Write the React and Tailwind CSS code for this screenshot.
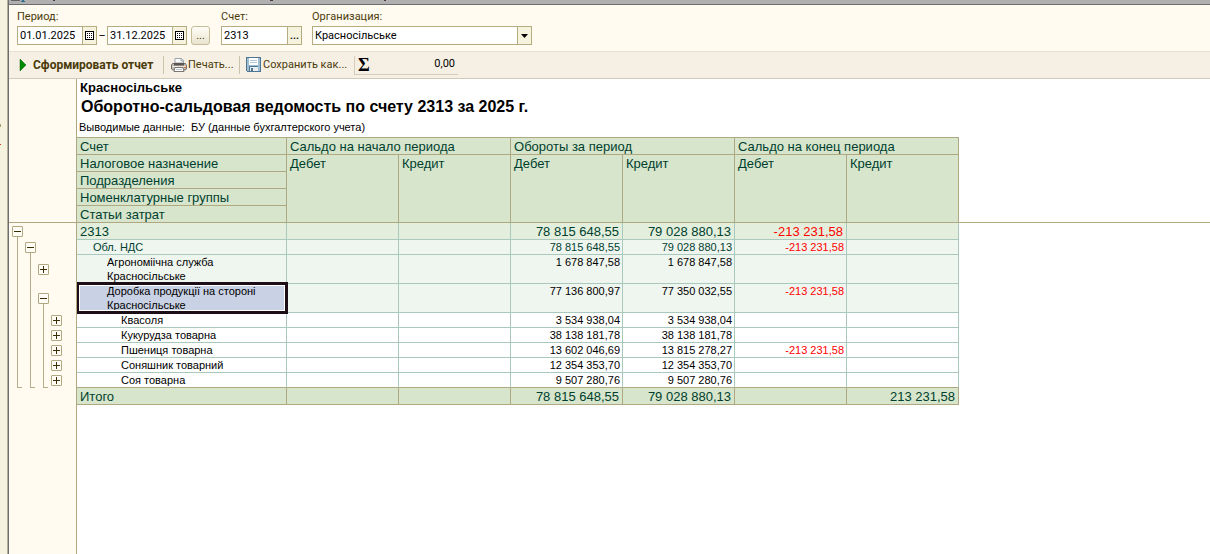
import clsx from "clsx";

const accounts = ["Счет", "Налоговое назначение", "Подразделения", "Номенклатурные группы", "Статьи затрат"];
const groups = ["Сальдо на начало периода", "Обороты за период", "Сальдо на конец периода"];

// level = nesting depth in the tree, values = six money columns
const rows = [
  { name: "2313", level: 1, open: true, values: ["", "", "78 815 648,55", "79 028 880,13", "-213 231,58", ""] },
  { name: "Обл. НДС", level: 2, open: true, values: ["", "", "78 815 648,55", "79 028 880,13", "-213 231,58", ""] },
  { name: "Агрономіічна служба Красносільське", level: 3, open: false, values: ["", "", "1 678 847,58", "1 678 847,58", "", ""] },
  { name: "Доробка продукції на стороні Красносільське", level: 3, open: true, selected: true, values: ["", "", "77 136 800,97", "77 350 032,55", "-213 231,58", ""] },
  { name: "Квасоля", level: 4, values: ["", "", "3 534 938,04", "3 534 938,04", "", ""] },
  { name: "Кукурудза товарна", level: 4, values: ["", "", "38 138 181,78", "38 138 181,78", "", ""] },
  { name: "Пшениця товарна", level: 4, values: ["", "", "13 602 046,69", "13 815 278,27", "-213 231,58", ""] },
  { name: "Соняшник товарний", level: 4, values: ["", "", "12 354 353,70", "12 354 353,70", "", ""] },
  { name: "Соя товарна", level: 4, values: ["", "", "9 507 280,76", "9 507 280,76", "", ""] },
];

const totals = ["", "", "78 815 648,55", "79 028 880,13", "", "213 231,58"];

const levelStyles = {
  1: { row: "h-[17px] text-[13px] leading-[15px] text-[#003f2f]", cell: "bg-[#e3efdc] pt-px", indent: "pl-[3px]", value: "pr-[3px]", tree: "h-[17px]" },
  2: { row: "h-[15px] text-[11px] leading-[14px] text-[#003f2f]", cell: "bg-[#eff5ef]", indent: "pl-4", value: "pr-[2px]", tree: "h-[15px]" },
  3: { row: "h-[29px] text-[11px] leading-[14px] text-black", cell: "bg-[#eff5ef]", indent: "pl-[30px] pr-6", value: "pr-[2px]", tree: "h-[29px]" },
  4: { row: "h-[15px] text-[11px] leading-[14px] text-black", cell: "bg-white", indent: "pl-11", value: "pr-[2px]", tree: "h-[15px]" },
};

const CalendarIcon = () => (
  <svg width="9" height="9" viewBox="0 0 9 9" shapeRendering="crispEdges" aria-hidden="true">
    <path d="M0 0h9v9h-9z" fill="#000" />
    <path d="M1 1h7v7h-7z" fill="#fff" />
    <path d="M2 2h1v1h-1zM4 2h1v1h-1zM6 2h1v1h-1zM2 4h1v1h-1zM4 4h1v1h-1zM6 4h1v1h-1zM2 6h1v1h-1zM4 6h1v1h-1zM6 6h1v1h-1z" fill="#000" />
  </svg>
);

const PrinterIcon = () => (
  <svg width="16" height="16" viewBox="0 0 16 16" aria-hidden="true">
    <path d="M4 6V1.500h6.500L12.500 3.500V6z" fill="#fff" stroke="#9aa3ad" />
    <path d="M10 1.500v2.500h2.500" fill="none" stroke="#9aa3ad" />
    <path d="M1.500 6.500h13l1 2v3.500l-1.500 1h-12l-1.500-1V8z" fill="#c4bcb2" stroke="#77706a" />
    <path d="M3 6h10v2.500H3z" fill="#5c5753" />
    <path d="M1.500 9.500h13" stroke="#ece8e2" />
    <path d="M4 10.500h8l1 4H3z" fill="#fff" stroke="#7b7672" />
    <path d="M5 12.500h6" stroke="#b8c4d4" />
    <rect x="13" y="10" width="2" height="1" fill="#d97a35" />
  </svg>
);

const DiskIcon = () => (
  <svg width="16" height="16" viewBox="0 0 16 16" shapeRendering="crispEdges" aria-hidden="true">
    <path d="M0 0h15v15h-14l-1-1z" fill="#4f7590" />
    <path d="M1 1h13v13h-13z" fill="#9dbdd2" />
    <path d="M3 1h9v7h-9z" fill="#fff" />
    <path d="M4 3h7v1h-7zM4 5h7v1h-7z" fill="#b5c8d6" />
    <path d="M3 9h9v5h-9z" fill="#4f7590" />
    <path d="M4 10h8v4h-8z" fill="#e8eef3" />
    <path d="M5 11h2v3h-2z" fill="#4f7590" />
  </svg>
);

const DateField = ({ id, label, value }) => (
  <div className="flex h-[19px] w-20 border border-[#b5ad7f] bg-white">
    <input id={id} aria-label={label} defaultValue={value} className="min-w-0 flex-1 pt-px pl-[2px] text-black outline-none" />
    <button aria-label="Календарь" className="flex w-[14px] items-center justify-center border-l border-[#b5ad7f] bg-[#f5f2dd]">
      <CalendarIcon />
    </button>
  </div>
);

const Separator = () => <div className="h-[18px] w-px bg-[#c9c3ae]" />;

const Filters = () => (
  <div className="flex border-b border-[#e6e1d2] bg-[#fffbf0] pt-1 pb-[6px] pl-2">
    <div className="flex w-[204px] flex-col gap-[2px]">
      <label htmlFor="from" className="leading-[15px]">Период:</label>
      <div className="flex items-center">
        <DateField id="from" label="Начало периода" value="01.01.2025" />
        <span className="w-[10px] text-center leading-[19px] text-black">–</span>
        <DateField id="to" label="Конец периода" value="31.12.2025" />
        <button aria-label="Выбрать период" className="ml-1 h-[19px] w-[19px] rounded-[3px] border border-[#c4bd98] bg-linear-to-b from-[#fffdf6] to-[#e9e4cf] leading-[15px]">
          ...
        </button>
      </div>
    </div>
    <div className="flex w-[91px] flex-col gap-[2px]">
      <label htmlFor="account" className="leading-[15px]">Счет:</label>
      <div className="flex h-[19px] w-[81px] border border-[#b5ad7f] bg-white">
        <input id="account" defaultValue="2313" className="min-w-0 flex-1 pt-px pl-[2px] text-black outline-none" />
        <button aria-label="Выбрать счет" className="w-[14px] border-l border-[#b5ad7f] bg-[#f5f2dd] font-medium leading-[15px] text-black">
          ...
        </button>
      </div>
    </div>
    <div className="flex flex-col gap-[2px]">
      <label htmlFor="org" className="leading-[15px]">Организация:</label>
      <div className="flex h-[19px] w-[220px] border border-[#b5ad7f] bg-white">
        <select id="org" className="min-w-0 flex-1 appearance-none pt-px pl-[2px] text-black outline-none">
          <option>Красносільське</option>
        </select>
        <span className="flex w-[14px] items-center justify-center border-l border-[#b5ad7f] bg-[#f5f2dd]">
          <svg width="7" height="4" viewBox="0 0 7 4" aria-hidden="true">
            <path d="M0 0h7L3.500 4z" fill="#000" />
          </svg>
        </span>
      </div>
    </div>
  </div>
);

const Toolbar = () => (
  <div className="flex h-[27px] items-center border-b border-[#d0cab8] bg-[#f6f0e4] pl-[10px]">
    <button className="flex items-center gap-[6px] text-[12px] font-bold">
      <svg width="8" height="12" viewBox="0 0 8 12" aria-hidden="true">
        <path d="M1 0l6 6-6 6z" fill="#008a00" stroke="#00600a" strokeWidth="0.500" />
      </svg>
      <span className="w-[130px] text-left">Сформировать отчет</span>
    </button>
    <Separator />
    <button className="ml-[7px] flex w-[68px] items-center gap-px">
      <PrinterIcon />
      Печать...
    </button>
    <Separator />
    <button className="ml-[6px] flex w-[108px] items-center gap-px">
      <DiskIcon />
      Сохранить как...
    </button>
    <div className="flex h-[19px] w-[104px] items-center justify-between border-b border-l border-[#d3cdba] pr-[3px] pl-[3px] text-black">
      <span className="font-['Liberation_Serif',serif] text-[18px] leading-[18px] font-bold">Σ</span>
      <span>0,00</span>
    </div>
  </div>
);

const Toggle = ({ open, name }) => (
  <button
    aria-label={name}
    aria-expanded={!!open}
    className="flex h-[11px] w-[11px] shrink-0 items-center justify-center rounded-[1px] border border-[#b0a880] bg-[#fffdf6]"
  >
    <svg width="7" height="7" viewBox="0 0 7 7" shapeRendering="crispEdges" aria-hidden="true">
      <path d={open ? "M0 3h7v1h-7z" : "M0 3h7v1h-7zM3 0h1v7h-1z"} fill="#3b2f08" />
    </svg>
  </button>
);

const TreeRow = ({ row, last }) => (
  <div className={clsx("flex pl-[2px]", levelStyles[row.level].tree)}>
    {[1, 2, 3, 4].slice(0, row.level).map((level) => {
      if (level === row.level) {
        return (
          <div key={level} className="flex w-[13px] flex-col items-center">
            <div className="flex-1" />
            <Toggle open={row.open} name={row.name} />
            <div className={clsx("w-px flex-1", row.open && "bg-[#b5ad8a]")} />
          </div>
        );
      }
      return (
        <div key={level} className="flex w-[13px] justify-end">
          <div className={clsx("w-[7px] border-l border-[#b5ad8a]", last && "flex items-end")}>
            {last && <div className="h-px w-1 bg-[#b5ad8a]" />}
          </div>
        </div>
      );
    })}
  </div>
);

const Tree = () => (
  <div className="w-[68px] shrink-0 border-r border-[#b0a880] bg-[#fffbf0]">
    <div className="h-36 border-b border-[#b0a880]" />
    {rows.map((row, i) => (
      <TreeRow key={row.name} row={row} last={i === rows.length - 1} />
    ))}
  </div>
);

const headCell = "border-r border-b border-[#b0a880] bg-[#d6e5cb] pt-px pl-[3px] text-left align-top font-normal";

const ReportRow = ({ row, last }) => {
  const styles = levelStyles[row.level];
  const border = clsx("border-r border-b border-r-[#a9c9be]", last ? "border-b-[#b0a880]" : "border-b-[#a9c9be]");
  return (
    <tr className={styles.row}>
      <th
        className={clsx(
          "text-left align-top font-normal",
          border,
          styles.indent,
          row.selected ? "relative bg-[#c9d1e4]" : styles.cell
        )}
      >
        {row.name}
        {row.selected && (
          <div className="absolute -top-[2px] -right-[2px] -bottom-[2px] left-0 border-3 border-l-2 border-[#1c0d17]">
            <div className="h-full border border-white" />
          </div>
        )}
      </th>
      {row.values.map((value, i) => (
        <td
          key={i}
          className={clsx("text-right align-top", border, styles.cell, styles.value, value.startsWith("-") && "text-[#ff0000]")}
        >
          {value}
        </td>
      ))}
    </tr>
  );
};

const Report = () => (
  <div className="min-w-0 flex-1 font-['Liberation_Sans',sans-serif] text-black">
    <p className="pl-[3px] text-[13px] leading-[17px] font-bold">Красносільське</p>
    <h1 className="pl-1 text-[16px] leading-[21px] font-bold">Оборотно-сальдовая ведомость по счету 2313 за 2025 г.</h1>
    <p className="pl-[2px] text-[11px] leading-[20px] whitespace-pre">Выводимые данные:  БУ (данные бухгалтерского учета)</p>
    <table className="w-full table-fixed border-separate border-spacing-0">
      <colgroup>
        <col className="w-[210px]" />
        {totals.map((_, i) => (
          <col key={i} className="w-28" />
        ))}
        <col />
      </colgroup>
      <thead className="text-[13px] leading-[15px] text-[#003f2f]">
        <tr>
          <th className={clsx(headCell, "border-t")}>{accounts[0]}</th>
          {groups.map((group) => (
            <th key={group} colSpan={2} className={clsx(headCell, "border-t")}>{group}</th>
          ))}
          <td rowSpan={5} className="border-b border-[#b0a880]" />
        </tr>
        <tr>
          <th className={headCell}>{accounts[1]}</th>
          {totals.map((_, i) => (
            <th key={i} rowSpan={4} className={headCell}>{i % 2 ? "Кредит" : "Дебет"}</th>
          ))}
        </tr>
        {accounts.slice(2).map((title) => (
          <tr key={title}>
            <th className={headCell}>{title}</th>
          </tr>
        ))}
      </thead>
      <tbody>
        {rows.map((row, i) => (
          <ReportRow key={row.name} row={row} last={i === rows.length - 1} />
        ))}
      </tbody>
      <tfoot className="text-[13px] leading-[15px] text-[#003f2f]">
        <tr>
          <th className={headCell}>Итого</th>
          {totals.map((value, i) => (
            <td key={i} className="border-r border-b border-[#b0a880] bg-[#d6e5cb] pt-px pr-[3px] text-right">{value}</td>
          ))}
        </tr>
      </tfoot>
    </table>
  </div>
);

export default function App() {
  return (
    <div className="flex min-h-screen bg-white font-['Roboto',sans-serif] text-[11px] text-[#4b3a0a]">
      {/* Edge of the neighbouring panel */}
      <div className="w-2 shrink-0 border-r border-[#b3b0a0] bg-[#f5f2dd]">
        <svg width="7" height="150" viewBox="0 0 7 150" shapeRendering="crispEdges" aria-hidden="true">
          <path d="M0 124h1v3h-1z" fill="#a8a070" />
          <path d="M0 144h1v1h-1z" fill="#e0301e" />
        </svg>
      </div>
      <div className="flex min-w-0 flex-1 flex-col border-l border-[#6d6d6d]">
        {/* Bottom of the window caption */}
        <div className="h-[5px] border-b border-[#6d6d6d] bg-[#b0b0b0]">
          <svg width="400" height="4" viewBox="0 0 400 4" className="block" shapeRendering="crispEdges" aria-hidden="true">
            <path d="M2 0h9v1h-9z" fill="#666" />
            <path d="M13 0h2v1h-2zM12 1h4v1h-4z" fill="#2f6d8c" />
            <path d="M44 0h2v1h-2zM261 0h3v1h-3zM375 0h2v1h-2z" fill="#4a3340" />
          </svg>
        </div>
        <Filters />
        <Toolbar />
        <div className="flex flex-1">
          <Tree />
          <Report />
        </div>
      </div>
    </div>
  );
}
